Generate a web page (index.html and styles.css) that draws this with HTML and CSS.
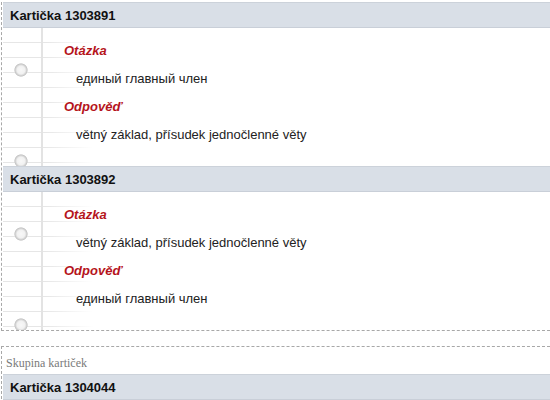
FILE: index.html
```html
<!DOCTYPE html>
<html lang="cs">
<head>
<meta charset="utf-8">
<title>Kartičky</title>
<link rel="stylesheet" href="styles.css">
</head>
<body>
<div class="page">
  <section class="group group--scrolled">
    <article class="card">
      <h2 class="card-head">Kartička 1303891</h2>
      <div class="card-body">
        <div class="label">Otázka</div>
        <div class="text">единый главный член</div>
        <div class="label">Odpověď</div>
        <div class="text">větný základ, přísudek jednočlenné věty</div>
      </div>
    </article>
    <article class="card">
      <h2 class="card-head">Kartička 1303892</h2>
      <div class="card-body">
        <div class="label">Otázka</div>
        <div class="text">větný základ, přísudek jednočlenné věty</div>
        <div class="label">Odpověď</div>
        <div class="text">единый главный член</div>
      </div>
    </article>
  </section>
  <section class="group">
    <div class="group-label">Skupina kartiček</div>
    <article class="card">
      <h2 class="card-head">Kartička 1304044</h2>
      <div class="card-body"></div>
    </article>
  </section>
</div>
</body>
</html>
```

FILE: styles.css
```css
html, body {
  margin: 0;
  padding: 0;
  background: #fff;
  overflow: hidden;
}

body {
  font-family: "Liberation Sans", Arial, sans-serif;
  color: #222;
}

.page {
  padding-top: 2px;
  margin-left: 1px;
}

.group {
  border: 1px dashed #a8a8a8;
  border-right: none;
  padding-left: 1px;
  margin-bottom: 15px;
}

.group--scrolled {
  border-top: none;
}

.group-label {
  font-family: "Liberation Serif", "Times New Roman", serif;
  font-size: 12px;
  color: #7a7a7a;
  height: 22px;
  line-height: 22px;
  padding: 5px 0 0 3px;
}

.card-head {
  margin: 0;
  height: 24px;
  line-height: 25px;
  font-size: 13px;
  font-weight: bold;
  color: #111;
  background: #d9dfe7;
  border-top: 1px solid #ccd2da;
  border-bottom: 1px solid #c9cfd8;
  padding-left: 7px;
}

.card-body {
  height: 138px;
  box-sizing: border-box;
  padding: 9px 0 0 0;
  overflow: hidden;
  background:
    radial-gradient(circle 7px at 18px 42px, #f8f8f8 0, #f1f1f1 4px, #d2d2d2 5.5px, #c4c4c4 6.2px, rgba(255,255,255,0) 7px) no-repeat,
    radial-gradient(circle 7px at 18px 133px, #f8f8f8 0, #f1f1f1 4px, #d2d2d2 5.5px, #c4c4c4 6.2px, rgba(255,255,255,0) 7px) no-repeat,
    linear-gradient(to right, rgba(0,0,0,0) 38px, #e3e3e3 38px, #e3e3e3 40px, rgba(0,0,0,0) 40px),
    linear-gradient(to right, rgba(255,255,255,0) 42px, #fff 90px),
    repeating-linear-gradient(to bottom, rgba(0,0,0,0) 0, rgba(0,0,0,0) 14px, #e6e6e6 14px, #e6e6e6 15px),
    #fff;
}

.label,
.text {
  height: 28px;
  line-height: 28px;
  font-size: 13px;
}

.label {
  padding-left: 61px;
  font-weight: bold;
  font-style: italic;
  color: #b5141c;
}

.text {
  padding-left: 73px;
  color: #222;
}
```
